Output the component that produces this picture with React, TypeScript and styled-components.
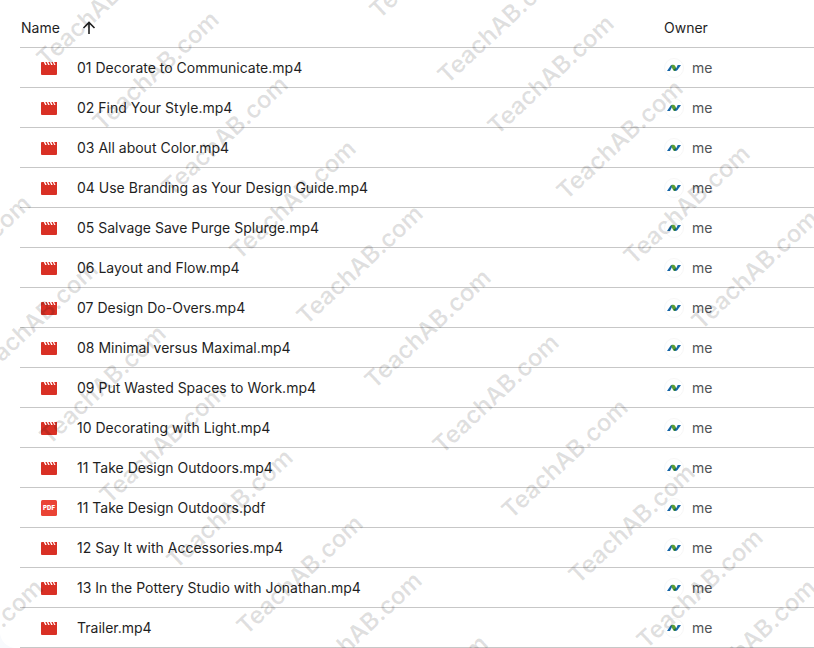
import React from "react";
import styled, { createGlobalStyle } from "styled-components";

const GlobalStyle = createGlobalStyle`
  * { box-sizing: border-box; }
  body {
    margin: 0;
    background: #f8fafd;
    font-family: Inter, "Open Sans", sans-serif;
    font-size: 14px;
    line-height: 20px;
    color: #1f1f1f;
  }
`;

const Page = styled.div`
  position: relative;
  overflow: hidden;
`;

const Panel = styled.main`
  padding: 8px 0 0 20px;
  background: #fff;
  border-bottom-left-radius: 16px;
`;

const FileTable = styled.table`
  width: 100%;
  border-collapse: separate;
  border-spacing: 0;
  table-layout: fixed;
`;

const HeaderCell = styled.th<{ $width?: string }>`
  width: ${(p) => p.$width ?? "auto"};
  height: 40px;
  padding: 0 1px;
  border-bottom: 1px solid #c7c7c7;
  font-weight: 400;
  text-align: left;
`;

const HeaderContent = styled.div`
  display: flex;
  align-items: center;
  gap: 22px;
`;

const SortButton = styled.button`
  display: flex;
  padding: 0;
  border: 0;
  background: none;
  color: #1f1f1f;
`;

const Cell = styled.td<{ $muted?: boolean }>`
  height: 40px;
  padding: 0;
  border-bottom: 1px solid #c7c7c7;
  color: ${(p) => (p.$muted ? "#505255" : "#1f1f1f")};
`;

const FileName = styled.div`
  display: flex;
  align-items: center;
  gap: 20px;
  padding-left: 21px;
  white-space: nowrap;
`;

const Owner = styled.div`
  display: flex;
  align-items: center;
  gap: 8px;
  padding-left: 1px;
`;

const Avatar = styled.span`
  display: flex;
  align-items: center;
  justify-content: center;
  width: 20px;
  height: 20px;
  border: 1px solid #f7f7f7;
  border-radius: 50%;
`;

const Watermarks = styled.div`
  position: absolute;
  inset: 0;
  overflow: hidden;
  pointer-events: none;
`;

const Watermark = styled.span<{ $x: number; $y: number }>`
  position: absolute;
  left: ${(p) => p.$x - 7}px;
  top: ${(p) => p.$y - 23}px;
  font: 600 24px/30px Inter, "Open Sans", sans-serif;
  color: rgba(0, 0, 0, 0.12);
  white-space: nowrap;
  transform-origin: 7px 24px;
  transform: rotate(-43deg);
`;

const ArrowUp = () => (
  <svg width="14" height="14" viewBox="0 0 14 14" fill="none" stroke="currentColor" strokeWidth="1.6" aria-hidden="true">
    <path d="M7 13V2M1.5 7L7 1.5L12.5 7" />
  </svg>
);

const VideoIcon = () => (
  <svg width="16" height="16" viewBox="0 0 16 16" role="img" aria-label="Video">
    <path
      fill="#d93025"
      d="M0 3Q0 2 1 2H2.8L4.2 5H5.7L4.3 2H5.8L7.2 5H8.7L7.3 2H8.8L10.2 5H11.7L10.3 2H11.8L13.2 5H14.5L13.1 2H16V14Q16 15 15 15H1Q0 15 0 14Z"
    />
  </svg>
);

const PdfIcon = () => (
  <svg width="16" height="16" viewBox="0 0 16 16" role="img" aria-label="PDF">
    <rect width="16" height="16" rx="1.5" fill="#ea4335" />
    <text x="8" y="10.3" textAnchor="middle" fontFamily="Inter, sans-serif" fontSize="6" fontWeight="900" fill="#fff">
      PDF
    </text>
  </svg>
);

const OwnerLogo = () => (
  <svg width="14" height="8" viewBox="0 0 14 8" aria-hidden="true">
    <path d="M0 7L3.5 1.8Q4.6 .5 6 1L3 7Z" fill="#1565a8" />
    <path d="M4.2 1.2Q7 .1 8.2 2L9.4 4.4L8.5 7Q6.6 7.4 5.8 5.5L4.8 3.4Z" fill="#5b9e35" />
    <path d="M6.5 5.5L9.8 3.8L8.8 6.6Q7.2 7.4 6.5 5.5Z" fill="#1f6b45" />
    <path d="M10.7 1H14L10.5 6Q9.6 7.1 8 7Z" fill="#1769aa" />
  </svg>
);

const files = [
  "01 Decorate to Communicate.mp4",
  "02 Find Your Style.mp4",
  "03 All about Color.mp4",
  "04 Use Branding as Your Design Guide.mp4",
  "05 Salvage Save Purge Splurge.mp4",
  "06 Layout and Flow.mp4",
  "07 Design Do-Overs.mp4",
  "08 Minimal versus Maximal.mp4",
  "09 Put Wasted Spaces to Work.mp4",
  "10 Decorating with Light.mp4",
  "11 Take Design Outdoors.mp4",
  "11 Take Design Outdoors.pdf",
  "12 Say It with Accessories.mp4",
  "13 In the Pottery Studio with Jonathan.mp4",
  "Trailer.mp4",
];

const marks = [
  [52, 63], [108, 127], [177, 192], [245, 256], [312, 321], [380, 385],
  [448, 450], [517, 515], [584, 580], [652, 645], [705, 695],
  [385, 15], [453, 80], [503, 131], [572, 196], [639, 261], [707, 326],
  [-80, 311], [-13, 377], [55, 441], [115, 500], [182, 565], [252, 631],
  [311, 688], [377, 751], [-68, 695],
];

export default function App() {
  return (
    <Page>
      <GlobalStyle />
      <Panel>
        <FileTable>
          <thead>
            <tr>
              <HeaderCell scope="col">
                <HeaderContent>
                  Name
                  <SortButton type="button" aria-label="Reverse sort direction">
                    <ArrowUp />
                  </SortButton>
                </HeaderContent>
              </HeaderCell>
              <HeaderCell scope="col" $width="151px">Owner</HeaderCell>
            </tr>
          </thead>
          <tbody>
            {files.map((name) => (
              <tr key={name}>
                <Cell>
                  <FileName>
                    {name.endsWith(".pdf") ? <PdfIcon /> : <VideoIcon />}
                    {name}
                  </FileName>
                </Cell>
                <Cell $muted>
                  <Owner>
                    <Avatar>
                      <OwnerLogo />
                    </Avatar>
                    me
                  </Owner>
                </Cell>
              </tr>
            ))}
          </tbody>
        </FileTable>
      </Panel>
      <Watermarks aria-hidden="true">
        {marks.map(([x, y]) => (
          <Watermark key={`${x}:${y}`} $x={x} $y={y}>
            TeachAB.com
          </Watermark>
        ))}
      </Watermarks>
    </Page>
  );
}
